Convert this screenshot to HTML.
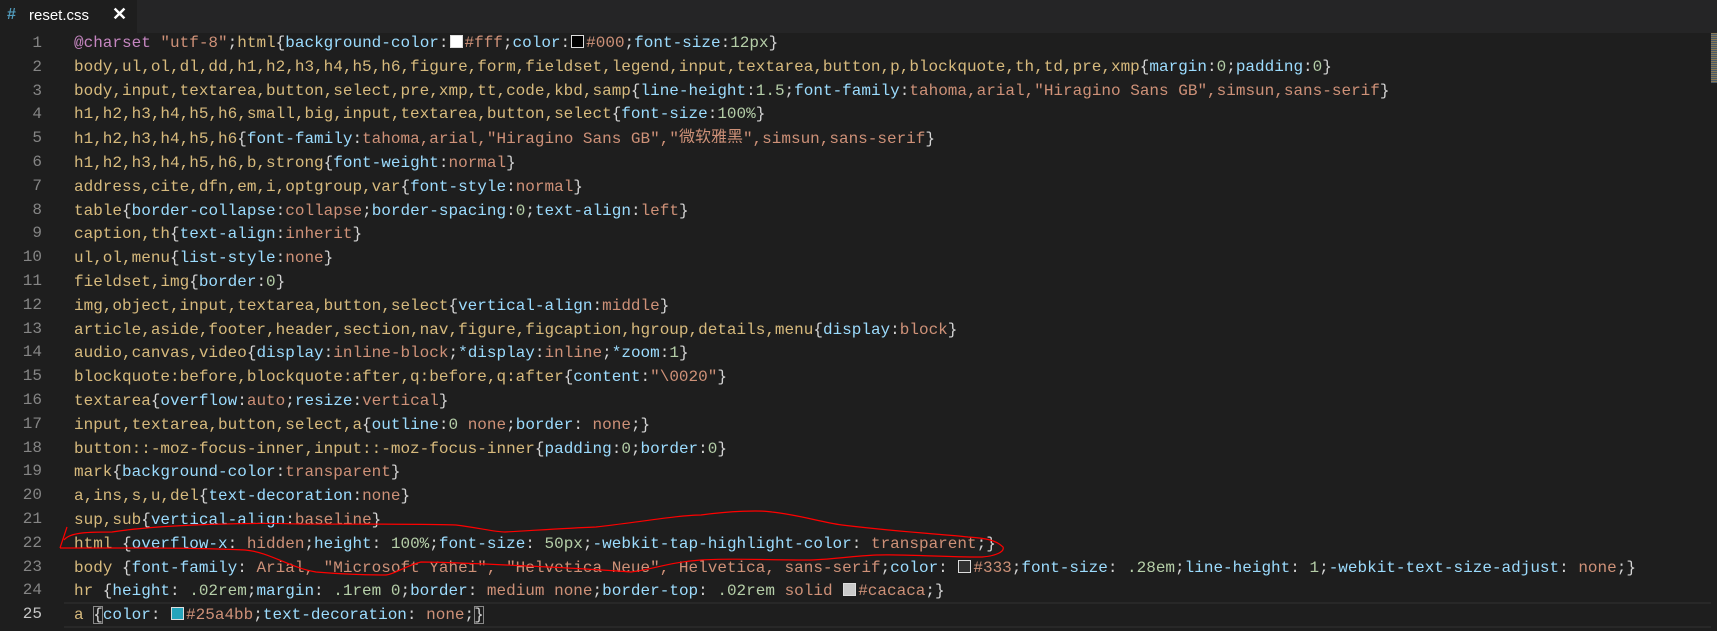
<!DOCTYPE html>
<html><head><meta charset="utf-8"><style>
body{margin:0;width:1717px;height:631px;background:#1e1e1e;overflow:hidden;position:relative;font-family:"Liberation Mono",monospace}
.tabs{position:absolute;left:0;top:0;width:1717px;height:33px;background:#252526}
.tab{position:absolute;left:0;top:0;width:137px;height:33px;background:#1e1e1e;font-family:"Liberation Sans",sans-serif;font-size:15px;color:#fff}
.tab .h{position:absolute;left:7px;top:6px;color:#519aba;font-weight:bold;font-size:16px}
.tab .t{position:absolute;left:29px;top:7px}
.tab .x{position:absolute;left:112px;top:4px;font-size:18px;font-weight:bold}
.cur{position:absolute;left:64px;top:602px;width:1647px;height:22px;border-top:2px solid #282828;border-bottom:2px solid #282828}
.ln{position:absolute;left:0;width:42px;text-align:right;color:#858585;font-size:16px;line-height:23.8px}
.code{position:absolute;left:74px;top:32px;font-size:16px;line-height:23.8px;white-space:pre;color:#d4d4d4}
.s{color:#d7ba7d}.p{color:#9cdcfe}.v{color:#ce9178}.n{color:#b5cea8}.k{color:#c586c0}
.sw{display:inline-block;width:11px;height:11px;border:1px solid #ddd;margin:0 2px 0 1px;vertical-align:-1px}
.bx{outline:1px solid #888;outline-offset:-1px}
.cjk{font-family:"Noto Sans CJK SC",sans-serif;display:inline-block;height:16px;line-height:16px;overflow:hidden}
.mm{position:absolute;left:1711px;top:33px;width:6px;height:50px;background:repeating-linear-gradient(#8a7a55 0 1px,#4a5a6a 1px 2px)}
</style></head><body>
<div class="tabs"><div class="tab"><span class="h">#</span><span class="t">reset.css</span><span class="x">✕</span></div></div>
<div class="cur"></div>
<div class="ln" style="top:32px">1<br>2<br>3<br>4<br>5<br>6<br>7<br>8<br>9<br>10<br>11<br>12<br>13<br>14<br>15<br>16<br>17<br>18<br>19<br>20<br>21<br>22<br>23<br>24<br><span style="color:#c6c6c6">25</span></div>
<div class="code"><span class="k">@charset</span> <span class="v">"utf-8"</span>;<span class="s">html</span>{<span class="p">background-color</span>:<span class="sw" style="background:#fff"></span><span class="v">#fff</span>;<span class="p">color</span>:<span class="sw" style="background:#000"></span><span class="v">#000</span>;<span class="p">font-size</span>:<span class="n">12px</span>}
<span class="s">body,ul,ol,dl,dd,h1,h2,h3,h4,h5,h6,figure,form,fieldset,legend,input,textarea,button,p,blockquote,th,td,pre,xmp</span>{<span class="p">margin</span>:<span class="n">0</span>;<span class="p">padding</span>:<span class="n">0</span>}
<span class="s">body,input,textarea,button,select,pre,xmp,tt,code,kbd,samp</span>{<span class="p">line-height</span>:<span class="n">1.5</span>;<span class="p">font-family</span>:<span class="v">tahoma,arial,"Hiragino Sans GB",simsun,sans-serif</span>}
<span class="s">h1,h2,h3,h4,h5,h6,small,big,input,textarea,button,select</span>{<span class="p">font-size</span>:<span class="n">100%</span>}
<span class="s">h1,h2,h3,h4,h5,h6</span>{<span class="p">font-family</span>:<span class="v">tahoma,arial,"Hiragino Sans GB","<span class="cjk">微软雅黑</span>",simsun,sans-serif</span>}
<span class="s">h1,h2,h3,h4,h5,h6,b,strong</span>{<span class="p">font-weight</span>:<span class="v">normal</span>}
<span class="s">address,cite,dfn,em,i,optgroup,var</span>{<span class="p">font-style</span>:<span class="v">normal</span>}
<span class="s">table</span>{<span class="p">border-collapse</span>:<span class="v">collapse</span>;<span class="p">border-spacing</span>:<span class="n">0</span>;<span class="p">text-align</span>:<span class="v">left</span>}
<span class="s">caption,th</span>{<span class="p">text-align</span>:<span class="v">inherit</span>}
<span class="s">ul,ol,menu</span>{<span class="p">list-style</span>:<span class="v">none</span>}
<span class="s">fieldset,img</span>{<span class="p">border</span>:<span class="n">0</span>}
<span class="s">img,object,input,textarea,button,select</span>{<span class="p">vertical-align</span>:<span class="v">middle</span>}
<span class="s">article,aside,footer,header,section,nav,figure,figcaption,hgroup,details,menu</span>{<span class="p">display</span>:<span class="v">block</span>}
<span class="s">audio,canvas,video</span>{<span class="p">display</span>:<span class="v">inline-block</span>;<span class="p">*display</span>:<span class="v">inline</span>;<span class="p">*zoom</span>:<span class="n">1</span>}
<span class="s">blockquote:before,blockquote:after,q:before,q:after</span>{<span class="p">content</span>:<span class="v">"\0020"</span>}
<span class="s">textarea</span>{<span class="p">overflow</span>:<span class="v">auto</span>;<span class="p">resize</span>:<span class="v">vertical</span>}
<span class="s">input,textarea,button,select,a</span>{<span class="p">outline</span>:<span class="n">0</span> <span class="v">none</span>;<span class="p">border</span>: <span class="v">none</span>;}
<span class="s">button::-moz-focus-inner,input::-moz-focus-inner</span>{<span class="p">padding</span>:<span class="n">0</span>;<span class="p">border</span>:<span class="n">0</span>}
<span class="s">mark</span>{<span class="p">background-color</span>:<span class="v">transparent</span>}
<span class="s">a,ins,s,u,del</span>{<span class="p">text-decoration</span>:<span class="v">none</span>}
<span class="s">sup,sub</span>{<span class="p">vertical-align</span>:<span class="v">baseline</span>}
<span class="s">html</span> {<span class="p">overflow-x</span>: <span class="v">hidden</span>;<span class="p">height</span>: <span class="n">100%</span>;<span class="p">font-size</span>: <span class="n">50px</span>;<span class="p">-webkit-tap-highlight-color</span>: <span class="v">transparent</span>;}
<span class="s">body</span> {<span class="p">font-family</span>: <span class="v">Arial, "Microsoft Yahei", "Helvetica Neue", Helvetica, sans-serif</span>;<span class="p">color</span>: <span class="sw" style="background:#333"></span><span class="v">#333</span>;<span class="p">font-size</span>: <span class="n">.28em</span>;<span class="p">line-height</span>: <span class="n">1</span>;<span class="p">-webkit-text-size-adjust</span>: <span class="v">none</span>;}
<span class="s">hr</span> {<span class="p">height</span>: <span class="n">.02rem</span>;<span class="p">margin</span>: <span class="n">.1rem 0</span>;<span class="p">border</span>: <span class="v">medium none</span>;<span class="p">border-top</span>: <span class="n">.02rem</span> <span class="v">solid</span> <span class="sw" style="background:#cacaca"></span><span class="v">#cacaca</span>;}
<span class="s">a</span> <span class="bx">{</span><span class="p">color</span>: <span class="sw" style="background:#25a4bb"></span><span class="v">#25a4bb</span>;<span class="p">text-decoration</span>: <span class="v">none</span>;<span class="bx">}</span></div>
<div class="mm"></div>
<svg style="position:absolute;left:0;top:0" width="1717" height="631"><path d="M60 548 L67 527 M64 540 C70 532,90 532,112 532 C150 526,230 522,300 524 C380 524,440 524,456 525 C480 528,495 532,505 532 C540 530,570 528,596 527 C640 522,680 515,701 515 C730 511,760 510,772 512 C800 515,820 522,842 525 C900 532,940 534,968 537 C985 538,996 540,1003 547 C1005 552,995 556,982 557 C940 557,900 554,877 555 C850 556,830 560,807 560 C760 560,730 558,701 560 C670 562,650 570,631 572 C580 568,450 562,421 562 C405 566,395 574,386 575 C360 575,340 574,316 572 C290 568,270 552,245 550 C200 548,170 548,140 548 C110 548,80 548,60 548" fill="none" stroke="#ff0000" stroke-width="1.2"/></svg>
</body></html>
